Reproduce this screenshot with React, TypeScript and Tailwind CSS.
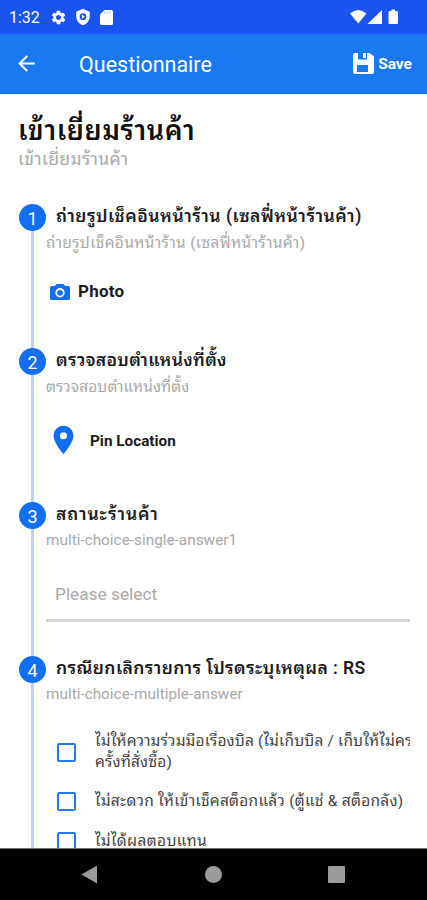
import type { ReactNode } from 'react';
import { MdArrowBack, MdPlace, MdSettings } from 'react-icons/md';

interface StepProps {
  index: number;
  title: string;
  subtitle: string;
  titleClass?: string;
  subtitleClass?: string;
  className: string;
  children: ReactNode;
}

const OPTIONS = [
  {
    lines: ['ไม่ให้ความร่วมมือเรื่องบิล (ไม่เก็บบิล / เก็บให้ไม่คร', 'ครั้งที่สั่งซื้อ)'],
    row: 'h-[62px]',
    text: 'tracking-[0.15px]',
  },
  { lines: ['ไม่สะดวก ให้เข้าเช็คสต็อกแล้ว (ตู้แช่ & สต็อกลัง)'], row: 'h-[36px]', text: 'tracking-[0.27px]' },
  { lines: ['ไม่ได้ผลตอบแทน'], row: 'h-[45px]', text: 'tracking-[0.35px]' },
];

function StatusBar() {
  return (
    <div className="flex h-[34px] shrink-0 items-center bg-[#1a54f0] pl-[9px] pr-[28px] text-white">
      <span className="w-[41px] pt-[2px] text-[16px] leading-none">1:32</span>
      <MdSettings className="h-[17px] w-[17px]" />
      <svg viewBox="0 0 24 24" className="ml-[7px] h-[18px] w-[18px]" fill="currentColor">
        <path
          fillRule="evenodd"
          d="M12 1 3 5v6c0 5.500 3.800 10.700 9 12 5.200-1.300 9-6.500 9-12V5l-9-4zm0 6a4.500 4.500 0 1 1 0 9 4.500 4.500 0 0 1 0-9z"
        />
        <path d="M10.500 8.800v5.400l4-2.700z" />
      </svg>
      <svg viewBox="0 0 13 15" className="ml-[8px] h-[15px] w-[13px]" fill="currentColor">
        <path d="M4.500 0H11.500Q13 0 13 1.500V13.500Q13 15 11.500 15H1.500Q0 15 0 13.500V4.500z" />
        <path d="M4.800 2v1.500M7.300 2v1.500M9.800 2v1.500" stroke="#1a54f0" strokeWidth="0.500" />
      </svg>
      <svg viewBox="0 0 49 16" className="ml-auto h-[16px] w-[49px]" fill="currentColor">
        <path d="M0 4.500Q8 -2.500 16.500 4.500L8.300 14.500z" />
        <path d="M32 1v14H17.500z" />
        <path d="M41.500 0.500h3.500v1.500h2q1 0 1 1v11q0 1-1 1h-7.500q-1 0-1-1V3q0-1 1-1h2z" />
      </svg>
    </div>
  );
}

function AppBar() {
  return (
    <div className="flex h-[60px] shrink-0 items-center border-b border-[#1668d8] bg-[#1a78f2] pl-[14px] pr-[15px] text-white">
      <MdArrowBack className="h-[25px] w-[25px]" />
      <h1 className="ml-[40px] pt-[3px] text-[21.500px] leading-none">Questionnaire</h1>
      <button className="ml-auto flex items-center gap-[4px]">
        <svg viewBox="0 0 21 21" className="h-[21px] w-[21px]" fill="currentColor">
          <path
            fillRule="evenodd"
            d="M2 0h3v6.500h9V0h2.500L21 3.500V19q0 2-2 2H2q-2 0-2-2V2q0-2 2-2zM4 12v7h11v-7z"
          />
          <path d="M10 0h3v5h-3z" />
        </svg>
        <span className="pt-[3px] text-[15.500px] font-bold leading-none">Save</span>
      </button>
    </div>
  );
}

function Step({ index, title, subtitle, titleClass = '', subtitleClass = '', className, children }: StepProps) {
  return (
    <section className={`flex ${className}`}>
      <div className="flex w-[27px] shrink-0 flex-col items-center">
        <div className="flex h-[27px] w-[27px] shrink-0 items-center justify-center rounded-full bg-[#126ff2] pt-[2px] text-[18px] leading-none text-white">
          {index}
        </div>
        <div className="mr-[1px] w-[3px] flex-1 bg-[#c3cffb]" />
      </div>
      <div className="min-w-0 flex-1">
        <h3 className={`h-[27px] whitespace-nowrap pl-[10px] text-[17.500px] font-semibold leading-[25px] text-[#1c1c1c] ${titleClass}`}>
          {title}
        </h3>
        <p className={`h-[24px] whitespace-nowrap text-[#a9a9a9] ${subtitleClass}`}>{subtitle}</p>
        {children}
      </div>
    </section>
  );
}

function NavBar() {
  return (
    <div className="flex h-[52px] shrink-0 items-center justify-between border-t border-[#777] bg-black pl-[81px] pr-[82px]">
      <svg viewBox="0 0 17 19" className="h-[19px] w-[17px]" fill="#9b9b9b">
        <path d="M16 .5v18L.5 9.500z" />
      </svg>
      <div className="h-[17px] w-[17px] rounded-full bg-[#9b9b9b]" />
      <div className="h-[17px] w-[17px] rounded-[1px] bg-[#9b9b9b]" />
    </div>
  );
}

export default function App() {
  return (
    <div className="flex h-[900px] w-[427px] flex-col overflow-hidden bg-white font-[Roboto,'Noto_Sans_Thai_Looped','Noto_Looped_Thai','Droid_Sans_Thai',Loma,Waree,Garuda,Umpush,Laksaman,'Noto_Sans_Thai',sans-serif]">
      <StatusBar />
      <AppBar />
      <main className="min-h-0 flex-1 overflow-hidden pl-[18px] pr-[17px] pt-[20px]">
        <h2 className="h-[32px] whitespace-nowrap text-[27px] font-semibold leading-[34px] tracking-[0.65px] text-[#111]">
          เข้าเยี่ยมร้านค้า
        </h2>
        <p className="h-[26px] whitespace-nowrap text-[17.500px] leading-[26px] tracking-[0.35px] text-[#a9a9a9]">เข้าเยี่ยมร้านค้า</p>

        <div className="pl-[1px] pt-[32px]">
          <Step
            index={1}
            title="ถ่ายรูปเช็คอินหน้าร้าน (เซลฟี่หน้าร้านค้า)"
            subtitle="ถ่ายรูปเช็คอินหน้าร้าน (เซลฟี่หน้าร้านค้า)"
            titleClass="tracking-[0.5px]"
            subtitleClass="text-[15.500px] leading-[25px] tracking-[0.32px]"
            className="h-[144px]"
          >
            <div className="mt-[25px] flex items-center pl-[4px]">
              <svg viewBox="0 0 20 16" className="h-[16px] w-[20px]" fill="#126ff2">
                <path d="M6.500 0h7l1.700 2H18.500Q20 2 20 3.500V14.500Q20 16 18.500 16h-17Q0 16 0 14.500V3.500Q0 2 1.500 2H4.800z" />
                <circle cx="10" cy="8.800" r="3.800" fill="none" stroke="#fff" strokeWidth="1.800" />
              </svg>
              <span className="ml-[8px] text-[17px] font-bold leading-[23px] tracking-[0.2px] text-[#1c1c1c]">Photo</span>
            </div>
          </Step>

          <Step
            index={2}
            title="ตรวจสอบตำแหน่งที่ตั้ง"
            subtitle="ตรวจสอบตำแหน่งที่ตั้ง"
            titleClass="tracking-[0.3px]"
            subtitleClass="text-[15.500px] leading-[25px] tracking-[0.06px]"
            className="h-[154px]"
          >
            <div className="mt-[24px] flex items-center">
              <MdPlace className="h-[34px] w-[35px] text-[#126ff2]" />
              <span className="ml-[9px] pt-[2px] text-[15.300px] font-bold leading-[24px] text-[#1c1c1c]">Pin Location</span>
            </div>
          </Step>

          <Step
            index={3}
            title="สถานะร้านค้า"
            subtitle="multi-choice-single-answer1"
            titleClass="tracking-[0.9px]"
            subtitleClass="text-[15.350px] leading-[23px]"
            className="h-[154px]"
          >
            <div className="mt-[14px] flex h-[55px] items-center border-b-[3px] border-[#d6d6d6] pl-[9px] pt-[3px] text-[17.300px] text-[#a9a9a9]">
              Please select
            </div>
          </Step>

          <Step
            index={4}
            title="กรณียกเลิกรายการ โปรดระบุเหตุผล : RS"
            subtitle="multi-choice-multiple-answer"
            titleClass="tracking-[0.42px]"
            subtitleClass="text-[15.350px] leading-[23px]"
            className="h-[240px]"
          >
            <div className="pt-[14px]">
              {OPTIONS.map(option => (
                <div key={option.lines[0]} className={`flex items-center overflow-hidden pl-[11px] ${option.row}`}>
                  <div className="h-[19px] w-[19px] shrink-0 rounded-[2px] border-2 border-[#2a78f0]" />
                  <div className={`ml-[19px] min-w-0 flex-1 overflow-hidden whitespace-nowrap text-[15.500px] leading-[21px] text-[#444] ${option.text}`}>
                    {option.lines.map(line => (
                      <div key={line}>{line}</div>
                    ))}
                  </div>
                </div>
              ))}
            </div>
          </Step>
        </div>
      </main>
      <NavBar />
    </div>
  );
}
